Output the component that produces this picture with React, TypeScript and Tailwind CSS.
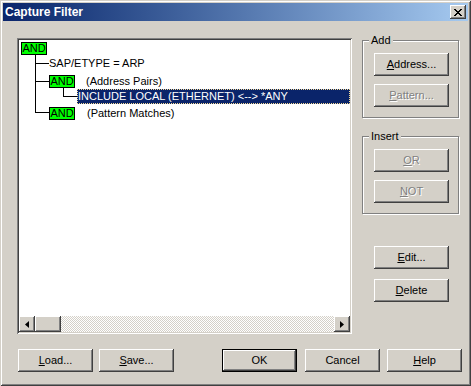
import React from "react";

const raised =
  "shadow-[inset_-1px_-1px_#404040,inset_1px_1px_#ffffff,inset_-2px_-2px_#808080,inset_2px_2px_#d4d0c8]";

function Key({ children }: { children: React.ReactNode }) {
  return <span className="underline underline-offset-[1px]">{children}</span>;
}

function Btn({
  children,
  disabled,
  def,
  className = "",
}: {
  children: React.ReactNode;
  disabled?: boolean;
  def?: boolean;
  className?: string;
}) {
  const txt = disabled ? "text-[#808080] [text-shadow:1px_1px_#ffffff]" : "text-black";
  if (def) {
    return (
      <div className={`w-[75px] h-[23px] border border-black bg-[#d4d0c8] ${className}`}>
        <div className={`w-full h-full flex items-center justify-center ${raised} ${txt}`}>{children}</div>
      </div>
    );
  }
  return (
    <div className={`w-[75px] h-[23px] flex items-center justify-center bg-[#d4d0c8] ${raised} ${txt} ${className}`}>
      {children}
    </div>
  );
}

function Group({ label, children, className = "" }: { label: string; children: React.ReactNode; className?: string }) {
  return (
    <div
      className={`relative w-[97px] h-[78px] border border-[#808080] shadow-[1px_1px_0_#ffffff,inset_1px_1px_0_#ffffff] pl-[11px] pt-[12px] flex flex-col gap-[8px] ${className}`}
    >
      <span className="absolute -top-[8px] left-[6px] bg-[#d4d0c8] px-[2px] leading-[14px] font-normal">{label}</span>
      {children}
    </div>
  );
}

function AndBox() {
  return (
    <div className="w-[26px] h-[13px] bg-[#00ff00] border border-black flex items-center justify-center text-black leading-none text-[11px]">
      AND
    </div>
  );
}

function ArrowBtn({ dir }: { dir: "l" | "r" }) {
  return (
    <div className={`w-[16px] h-[16px] flex items-center justify-center bg-[#d4d0c8] ${raised}`}>
      <svg width="4" height="7" viewBox="0 0 4 7">
        {dir === "l" ? <path d="M4 0 L0 3.5 L4 7 Z" fill="#000" /> : <path d="M0 0 L4 3.5 L0 7 Z" fill="#000" />}
      </svg>
    </div>
  );
}

export default function App() {
  return (
    <div className="w-[471px] h-[386px] bg-[#d4d0c8] p-[3px] flex flex-col shadow-[inset_1px_1px_#d4d0c8,inset_-1px_-1px_#404040,inset_2px_2px_#ffffff,inset_-2px_-2px_#808080] font-['Liberation_Sans',Arial,sans-serif] text-[11px] text-black select-none">
      {/* Title bar */}
      <div className="h-[18px] flex items-center justify-between pl-[2px] pr-[2px] bg-gradient-to-r from-[#0a246a] to-[#a6caf0]">
        <span className="text-white font-bold text-[12px] leading-none">Capture Filter</span>
        <div className={`w-[16px] h-[14px] flex items-center justify-center bg-[#d4d0c8] ${raised}`}>
          <svg width="8" height="7" viewBox="0 0 8 7" shapeRendering="crispEdges">
            <path
              d="M0 0h2v1h-2z M6 0h2v1h-2z M1 1h2v1h-2z M5 1h2v1h-2z M2 2h4v1h-4z M3 3h2v1h-2z M2 4h4v1h-4z M1 5h2v1h-2z M5 5h2v1h-2z M0 6h2v1h-2z M6 6h2v1h-2z"
              fill="#000"
            />
          </svg>
        </div>
      </div>

      {/* Body */}
      <div className="flex flex-col pl-[14px] pt-[17px]">
        <div className="flex">
          {/* Tree panel */}
          <div className="w-[335px] h-[296px] bg-white flex flex-col p-[2px] shadow-[inset_1px_1px_#808080,inset_-1px_-1px_#ffffff,inset_2px_2px_#404040,inset_-2px_-2px_#d4d0c8]">
            <div className="relative flex-1 flex flex-col">
              <svg className="absolute left-0 top-0" width="80" height="80" shapeRendering="crispEdges">
                <g stroke="#000" strokeWidth="1">
                  <line x1="16.5" y1="15" x2="16.5" y2="73" />
                  <line x1="16" y1="23.5" x2="30" y2="23.5" />
                  <line x1="16" y1="41.5" x2="30" y2="41.5" />
                  <line x1="16" y1="72.5" x2="30" y2="72.5" />
                  <line x1="44.5" y1="48" x2="44.5" y2="57" />
                  <line x1="44" y1="56.5" x2="58" y2="56.5" />
                </g>
              </svg>
              <div className="ml-[2px] mt-[2px]">
                <AndBox />
              </div>
              <div className="ml-[30px] mt-[1px] h-[15px] flex items-center leading-none">SAP/ETYPE = ARP</div>
              <div className="ml-[30px] mt-[4px] h-[13px] flex items-center gap-[11px] leading-none">
                <AndBox />
                <span>(Address Pairs)</span>
              </div>
              <div className="ml-[58px] mt-[1px] h-[15px] flex items-center bg-[#0a246a] text-white leading-none pl-[1px] outline outline-1 outline-dotted outline-[#f5db95] -outline-offset-1">
                INCLUDE LOCAL (ETHERNET) &lt;--&gt; *ANY
              </div>
              <div className="ml-[30px] mt-[3px] h-[13px] flex items-center gap-[12px] leading-none">
                <AndBox />
                <span>(Pattern Matches)</span>
              </div>
            </div>
            {/* Horizontal scrollbar */}
            <div className="h-[16px] flex">
              <ArrowBtn dir="l" />
              <div className={`w-[26px] h-[16px] bg-[#d4d0c8] ${raised}`} />
              <div className="flex-1 bg-[repeating-conic-gradient(#d4d0c8_0_25%,#ffffff_0_50%)] bg-[length:2px_2px]" />
              <ArrowBtn dir="r" />
            </div>
          </div>

          {/* Right column */}
          <div className="ml-[10px] pt-[2px] flex flex-col">
            <Group label="Add">
              <Btn>
                <span>
                  <Key>A</Key>ddress...
                </span>
              </Btn>
              <Btn disabled>
                <span>
                  <Key>P</Key>attern...
                </span>
              </Btn>
            </Group>
            <Group label="Insert" className="mt-[18px]">
              <Btn disabled>
                <span>
                  <Key>O</Key>R
                </span>
              </Btn>
              <Btn disabled>
                <span>
                  <Key>N</Key>OT
                </span>
              </Btn>
            </Group>
            <Btn className="ml-[12px] mt-[32px]">
              <span>
                <Key>E</Key>dit...
              </span>
            </Btn>
            <Btn className="ml-[12px] mt-[10px]">
              <span>
                <Key>D</Key>elete
              </span>
            </Btn>
          </div>
        </div>

        {/* Bottom buttons */}
        <div className="flex mt-[15px] ml-[1px]">
          <Btn>
            <span>
              <Key>L</Key>oad...
            </span>
          </Btn>
          <Btn className="ml-[6px]">
            <span>
              <Key>S</Key>ave...
            </span>
          </Btn>
          <Btn def className="ml-[48px]">
            OK
          </Btn>
          <Btn className="ml-[8px]">Cancel</Btn>
          <Btn className="ml-[7px]">
            <span>
              <Key>H</Key>elp
            </span>
          </Btn>
        </div>
      </div>
    </div>
  );
}
